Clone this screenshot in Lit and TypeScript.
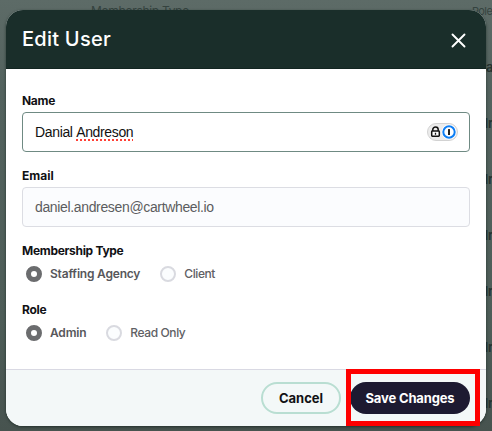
import { LitElement, html, css } from "lit";
import { customElement } from "lit/decorators.js";

@customElement("radio-option")
class RadioOption extends LitElement {
  static properties = {
    label: { type: String },
    checked: { type: Boolean, reflect: true },
  };
  declare label: string;
  declare checked: boolean;

  static styles = css`
    :host { display: flex; align-items: center; gap: 8px; height: 16px; }
    .dot {
      box-sizing: border-box; width: 16px; height: 16px; flex: none;
      border-radius: 50%; border: 2px solid #d9dae0; background: #fbfdfe;
    }
    :host([checked]) .dot { border: 5px solid #6b6c6e; background: #fff; }
    .text {
      font: 500 12px/16px Inter, sans-serif; color: #606064;
      white-space: nowrap; letter-spacing: -0.4px;
    }
    :host([checked]) .text { font-weight: 600; color: #57575b; letter-spacing: -0.2px; }
  `;

  render() {
    return html`<span class="dot"></span><span class="text">${this.label}</span>`;
  }
}

@customElement("app-root")
class AppRoot extends LitElement {
  static styles = css`
    :host {
      display: block; position: relative; width: 492px; height: 431px; overflow: hidden;
      background: linear-gradient(#5d6b67 0, #53625e 90px, #4e5d58 320px, #47534f 431px);
      font-family: Inter, sans-serif; color: #111114;
    }
    .behind { position: absolute; line-height: 16px; font-size: 12px; white-space: nowrap; color: #35433f; }
    .col-type { left: 91px; top: 3px; letter-spacing: -0.3px; }
    .col-role { left: 472px; top: 3px; font-size: 11px; letter-spacing: -0.6px; }
    .names { left: 480px; top: 59px; display: grid; grid-auto-rows: 56px; font-size: 13px; font-weight: 600; color: #25322f; }
    .names .first { padding-left: 6px; }
    .modal {
      position: absolute; left: 6px; top: 10px; width: 480px; height: 416px;
      border-radius: 17px; overflow: hidden; background: #fff;
      display: flex; flex-direction: column;
    }
    .shadow {
      position: absolute; left: 6px; top: 10px; width: 480px; height: 416px;
      border-radius: 17px; box-shadow: 0 1px 3px rgba(10, 25, 20, 0.6);
    }
    header {
      box-sizing: border-box; height: 59px; flex: none; padding: 0 20px 0 16px; background: #1a2e2a;
      display: flex; align-items: center; justify-content: space-between;
      border-bottom: 1px solid #122521;
    }
    h1 { margin: 0; font-size: 20px; font-weight: 500; line-height: 28px; color: #fff; letter-spacing: 0.25px; }
    .close { display: block; margin-top: 2px; }
    .body { flex: 1; padding: 24px 16px 0; display: flex; flex-direction: column; }
    .label { font-size: 12px; font-weight: 700; line-height: 16px; letter-spacing: -0.3px; }
    .label.short { letter-spacing: 0; }
    .field {
      box-sizing: border-box; height: 40px; margin: 3px 0 16px; padding: 0 12px;
      border: 1px solid #6f8a83; border-radius: 4px;
      display: flex; align-items: center; justify-content: space-between;
      font: 14px/18px "Liberation Sans", Arial, sans-serif; letter-spacing: -0.35px; color: #111;
    }
    .field.disabled { border-color: #dcdde3; background: #fbfcfe; color: #5b5c60; }
    .typo { position: relative; display: inline-block; }
    .typo::after {
      content: ""; position: absolute; left: 0; right: 0; bottom: 0; height: 2px;
      background: radial-gradient(circle at 1px 1px, #ff3b30 0.7px, transparent 1px) 0 0 / 4px 2px repeat-x;
    }
    .badge { display: block; margin-right: -1px; }
    .radios { display: flex; gap: 20px; margin: 7px 0 20px; padding-left: 4px; }
    footer {
      box-sizing: border-box; height: 57px; flex: none; padding: 12px 16px 0;
      border-top: 1px solid #d9d9e3; background: #f3f8f8;
      display: flex; justify-content: flex-end; gap: 9px;
    }
    .btn {
      box-sizing: border-box; height: 32px; border-radius: 16px;
      display: flex; align-items: center; justify-content: center;
      font-size: 13px; font-weight: 700; line-height: 16px; white-space: nowrap;
    }
    .cancel { width: 80px; border: 2px solid #b9ded2; }
    .save { width: 120px; background: #1d1a31; color: #fff; letter-spacing: -0.15px; }
    .highlight {
      position: absolute; box-sizing: border-box; left: 346px; top: 369px;
      width: 134px; height: 57px; border: 5px solid #fe0000;
    }
  `;

  render() {
    return html`
      <span class="behind col-type">Membership Type</span>
      <span class="behind col-role">Role</span>
      <div class="behind names">
        <span class="first">a</span>${[1, 2, 3, 4, 5, 6].map(() => html`<span>dr</span>`)}
      </div>
      <div class="shadow"></div>
      <div class="modal">
        <header>
          <h1>Edit User</h1>
          <svg class="close" width="15" height="15" viewBox="0 0 15 15" fill="none" stroke="#fff" stroke-width="1.9" stroke-linecap="round">
            <path d="M1.5 1.5l12 12M13.5 1.5l-12 12" />
          </svg>
        </header>
        <div class="body">
          <div class="label">Name</div>
          <div class="field">
            <span>Danial <span class="typo">Andreson</span></span>
            <svg class="badge" width="31" height="18" viewBox="0 0 31 18">
              <rect x=".5" y=".5" width="30" height="17" rx="8.5" fill="#ececec" stroke="#d2d2d2" />
              <path d="M5.8 8V6.6a2.7 2.7 0 0 1 5.4 0V8" fill="none" stroke="#111" stroke-width="1.5" />
              <rect x="4.7" y="8.1" width="7.6" height="5.2" rx=".7" fill="#fff" stroke="#111" stroke-width="1.5" />
              <path d="M8.5 9.7v2" stroke="#111" stroke-width="1.3" />
              <circle cx="22" cy="9" r="7.5" fill="#fff" />
              <circle cx="22" cy="9" r="5.7" fill="#fff" stroke="#0d7ef5" stroke-width="2" />
              <rect x="21" y="6" width="2" height="6" rx=".5" fill="#222" />
            </svg>
          </div>
          <div class="label short">Email</div>
          <div class="field disabled">daniel.andresen@cartwheel.io</div>
          <div class="label">Membership Type</div>
          <div class="radios">
            <radio-option label="Staffing Agency" checked></radio-option>
            <radio-option label="Client"></radio-option>
          </div>
          <div class="label">Role</div>
          <div class="radios">
            <radio-option label="Admin" checked></radio-option>
            <radio-option label="Read Only"></radio-option>
          </div>
        </div>
        <footer>
          <div class="btn cancel">Cancel</div>
          <div class="btn save">Save Changes</div>
        </footer>
      </div>
      <div class="highlight"></div>
    `;
  }
}
